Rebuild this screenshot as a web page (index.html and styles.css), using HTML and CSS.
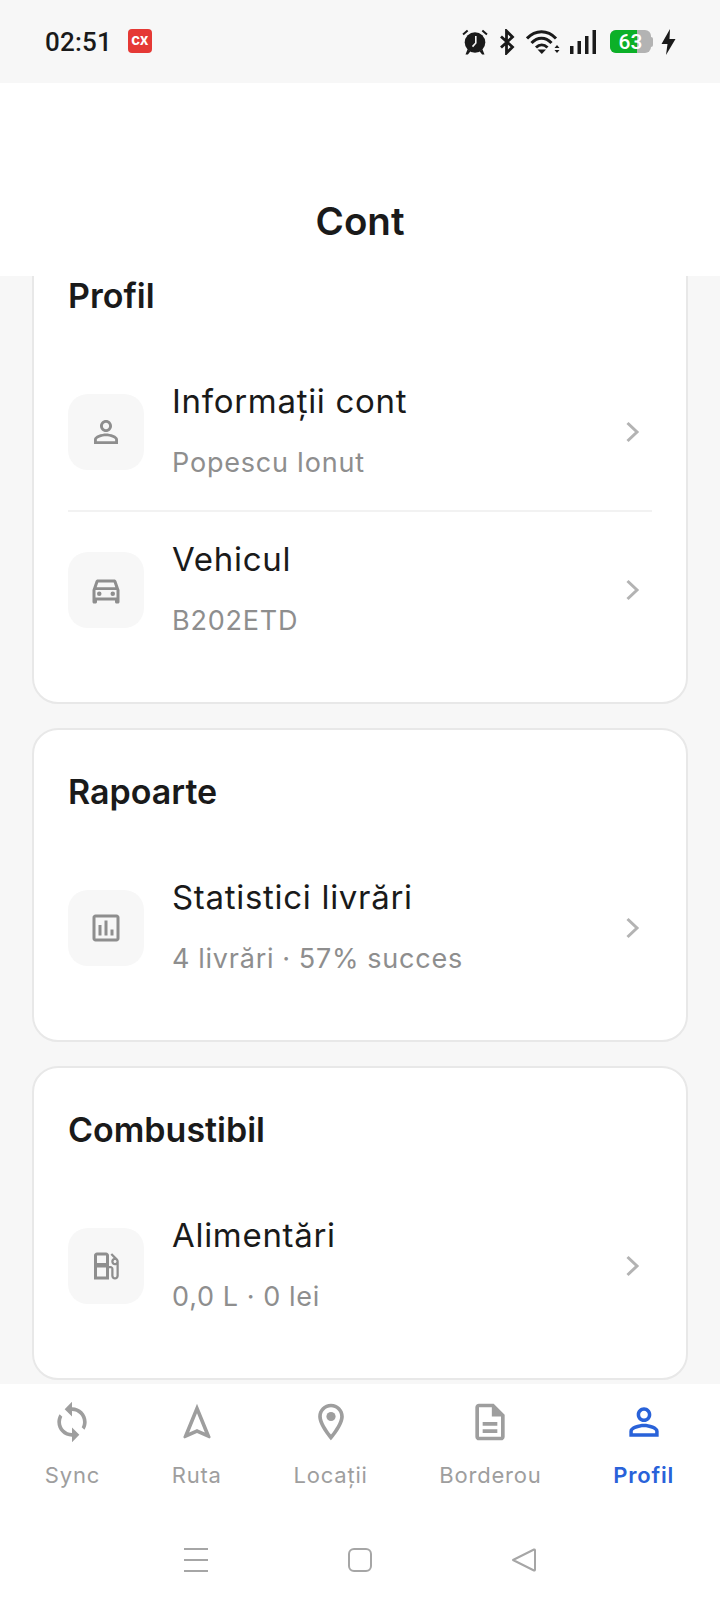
FILE: index.html
```html
<!DOCTYPE html>
<html lang="ro">
<head>
<meta charset="utf-8">
<title>Cont</title>
<link rel="stylesheet" href="styles.css">
</head>
<body>
<div class="phone">
  <div class="status">
    <div class="status-left">
      <span class="time">02:51</span>
      <span class="cx">cx</span>
    </div>
    <div class="status-right">
      <svg class="s-alarm" width="26" height="26" viewBox="0 0 26 26"><path d="M5 0.800 0.400 4.800l1.300 1.500L6.300 2.300zM21 0.800l4.600 4-1.300 1.500-4.600-4z" fill="#1a1a1a"/><circle cx="13" cy="13.500" r="10.300" fill="#1a1a1a"/><path d="M5.500 20.500 3.500 25.500h2.400l2.600-3.200zM20.500 20.500l2 5h-2.400l-2.600-3.200z" fill="#1a1a1a"/><path d="M13.800 7v7l-3.300 3.600" fill="none" stroke="#f7f7f7" stroke-width="1.600"/></svg>
      <svg class="s-bt" width="16" height="26" viewBox="0 0 16 26"><path d="M2 7.500 13.500 18 7.500 24V2l6 6L2 18.500" fill="none" stroke="#1a1a1a" stroke-width="2.800"/></svg>
      <svg class="s-wifi" width="34" height="26" viewBox="0 0 34 26"><path d="M1 9.500C9.500 0.500 21.500 0.500 30 9.500M5.500 14C11.500 7.500 19.500 7.500 25.500 14M10 18.500c3.500-3.300 8-3.300 11.500 0" fill="none" stroke="#1a1a1a" stroke-width="3"/><path d="M11.500 20.500h8.500l-4.200 4.500z" fill="#1a1a1a"/><path d="M28.500 19h5l-2.500-3zM28.500 21h5l-2.500 3z" fill="#1a1a1a"/></svg>
      <svg class="s-signal" width="26" height="24" viewBox="0 0 26 24"><path d="M0 16h3.500v8H0zM7.500 11H11v13H7.500zM15 6h3.500v18H15zM22.500 0H26v24h-3.500z" fill="#1a1a1a"/></svg>
      <div class="battery">
        <div class="battery-body"><div class="battery-fill"></div><span class="battery-num">63</span></div>
        <div class="battery-tip"></div>
      </div>
      <svg class="s-bolt" width="15" height="26" viewBox="0 0 15 26"><path d="M9 0 0.500 15H6.500L5 26 14.500 10H8.500z" fill="#1a1a1a"/></svg>
    </div>
  </div>

  <header class="header"><h1 class="page-title">Cont</h1></header>

  <main class="content">
    <section class="card card-first">
      <h2 class="card-title">Profil</h2>
      <div class="row row-divided">
        <div class="tile"><svg class="tile-icon" viewBox="0 0 24 24"><path d="M12 5.900c1.160 0 2.100.94 2.100 2.100s-.94 2.100-2.100 2.100S9.900 9.160 9.900 8s.94-2.100 2.100-2.100m0 9c2.970 0 6.100 1.460 6.100 2.100v1.100H5.900V17c0-.64 3.130-2.100 6.100-2.100M12 4C9.790 4 8 5.790 8 8s1.790 4 4 4 4-1.790 4-4-1.790-4-4-4zm0 9c-2.670 0-8 1.340-8 4v3h16v-3c0-2.660-5.330-4-8-4z"/></svg></div>
        <div class="row-text"><div class="row-title">Informații cont</div><div class="row-sub">Popescu Ionut</div></div>
        <svg class="chev" viewBox="0 0 16 22"><path d="M2.500 2 12 11 2.500 20"/></svg>
      </div>
      <div class="row">
        <div class="tile"><svg class="tile-icon" viewBox="0 0 24 24"><path d="M18.920 6.010C18.720 5.420 18.160 5 17.500 5h-11c-.66 0-1.210.42-1.420 1.010L3 12v8c0 .55.45 1 1 1h1c.55 0 1-.45 1-1v-1h12v1c0 .55.45 1 1 1h1c.55 0 1-.45 1-1v-8l-2.080-5.990zM6.850 7h10.290l1.080 3.110H5.770L6.850 7zM19 17H5v-5h14v5z"/><circle cx="7.500" cy="14.500" r="1.500"/><circle cx="16.500" cy="14.500" r="1.500"/></svg></div>
        <div class="row-text"><div class="row-title">Vehicul</div><div class="row-sub">B202ETD</div></div>
        <svg class="chev" viewBox="0 0 16 22"><path d="M2.500 2 12 11 2.500 20"/></svg>
      </div>
    </section>

    <section class="card">
      <h2 class="card-title">Rapoarte</h2>
      <div class="row">
        <div class="tile"><svg class="tile-icon" viewBox="0 0 24 24"><path d="M19 3H5c-1.100 0-2 .9-2 2v14c0 1.100.9 2 2 2h14c1.100 0 2-.9 2-2V5c0-1.100-.9-2-2-2zm0 16H5V5h14v14zM7 10h2v7H7zm4-3h2v10h-2zm4 6h2v4h-2z"/></svg></div>
        <div class="row-text"><div class="row-title">Statistici livrări</div><div class="row-sub">4 livrări · 57% succes</div></div>
        <svg class="chev" viewBox="0 0 16 22"><path d="M2.500 2 12 11 2.500 20"/></svg>
      </div>
    </section>

    <section class="card">
      <h2 class="card-title">Combustibil</h2>
      <div class="row">
        <div class="tile"><svg class="tile-icon" viewBox="0 0 24 24"><path d="M19.770 7.230l.01-.01-3.720-3.720L15 4.560l2.110 2.110c-.94.36-1.610 1.260-1.610 2.330 0 1.380 1.120 2.500 2.500 2.500.36 0 .69-.08 1-.21v7.210c0 .55-.45 1-1 1s-1-.45-1-1V14c0-1.100-.9-2-2-2h-1V5c0-1.100-.9-2-2-2H6c-1.100 0-2 .9-2 2v16h10v-7.500h1.500v5c0 1.380 1.120 2.500 2.500 2.500s2.500-1.120 2.500-2.500V9c0-.69-.28-1.320-.73-1.770zM12 13.500V19H6v-6h6v.5zm0-3.500H6V5h6v5zm6 0c-.55 0-1-.45-1-1s.45-1 1-1 1 .45 1 1-.45 1-1 1z"/></svg></div>
        <div class="row-text"><div class="row-title">Alimentări</div><div class="row-sub">0,0 L · 0 lei</div></div>
        <svg class="chev" viewBox="0 0 16 22"><path d="M2.500 2 12 11 2.500 20"/></svg>
      </div>
    </section>
  </main>

  <nav class="tabs">
    <div class="tab">
      <svg class="tab-icon" viewBox="0 0 24 24"><path d="M12 4V1L8 5l4 4V6c3.310 0 6 2.690 6 6 0 1.010-.25 1.970-.7 2.800l1.460 1.460C19.540 15.030 20 13.570 20 12c0-4.420-3.580-8-8-8zm0 14c-3.310 0-6-2.690-6-6 0-1.010.25-1.970.7-2.800L5.240 7.740C4.460 8.970 4 10.430 4 12c0 4.420 3.580 8 8 8v3l4-4-4-4v3z"/></svg>
      <span class="tab-label">Sync</span>
    </div>
    <div class="tab">
      <svg class="tab-icon" viewBox="0 0 24 24"><path d="M12 7.270l4.280 10.430-3.470-1.530-.81-.36-.81.36-3.470 1.530L12 7.270M12 2L4.500 20.290l.71.71L12 18l6.790 3 .71-.71L12 2z"/></svg>
      <span class="tab-label">Ruta</span>
    </div>
    <div class="tab">
      <svg class="tab-icon" viewBox="0 0 24 24"><path d="M12 2C8.130 2 5 5.130 5 9c0 5.250 7 13 7 13s7-7.750 7-13c0-3.870-3.130-7-7-7zM7 9c0-2.760 2.240-5 5-5s5 2.240 5 5c0 2.880-2.880 7.190-5 9.880C9.920 16.210 7 11.850 7 9z"/><circle cx="12" cy="9" r="2.500"/></svg>
      <span class="tab-label">Locații</span>
    </div>
    <div class="tab">
      <svg class="tab-icon" viewBox="0 0 24 24"><path d="M8 16h8v2H8zm0-4h8v2H8zm6-10H6c-1.100 0-2 .9-2 2v16c0 1.100.89 2 1.990 2H18c1.100 0 2-.9 2-2V8l-6-6zm4 18H6V4h7v5h5v11z"/></svg>
      <span class="tab-label">Borderou</span>
    </div>
    <div class="tab tab-active">
      <svg class="tab-icon" viewBox="0 0 24 24"><path d="M12 5.900c1.160 0 2.100.94 2.100 2.100s-.94 2.100-2.100 2.100S9.900 9.160 9.900 8s.94-2.100 2.100-2.100m0 9c2.970 0 6.100 1.460 6.100 2.100v1.100H5.900V17c0-.64 3.130-2.100 6.100-2.100M12 4C9.790 4 8 5.790 8 8s1.790 4 4 4 4-1.790 4-4-1.790-4-4-4zm0 9c-2.670 0-8 1.340-8 4v3h16v-3c0-2.660-5.330-4-8-4z"/></svg>
      <span class="tab-label">Profil</span>
    </div>
  </nav>

  <div class="sysnav">
    <svg class="sys-icon" viewBox="0 0 26 26"><path d="M1 2h24M1 13h24M1 24h24"/></svg>
    <svg class="sys-icon" viewBox="0 0 26 26"><rect x="2" y="2" width="22" height="22" rx="5"/></svg>
    <svg class="sys-icon" viewBox="0 0 26 26"><path d="M2 13 23 2.500c.6-.3 1 .1 1 .7v19.600c0 .6-.4 1-1 .7z" stroke-linejoin="round"/></svg>
  </div>
</div>
</body>
</html>
```

FILE: styles.css
```css
* { box-sizing: border-box; }

html, body { margin: 0; padding: 0; }

body {
  font-family: Inter, "Noto Sans", sans-serif;
  color: #1a1a1a;
  background: #fff;
}

.phone {
  width: 720px;
  height: 1604px;
  display: flex;
  flex-direction: column;
  overflow: hidden;
}

.status {
  height: 83px;
  flex: none;
  background: #f7f7f7;
  display: flex;
  align-items: center;
  justify-content: space-between;
  padding: 0 44px 0 45px;
}

.status-left { display: flex; align-items: center; gap: 16px; }

.time {
  font-family: Roboto, sans-serif;
  font-weight: 500;
  font-size: 26px;
  letter-spacing: 0.2px;
  line-height: 30px;
}

.cx {
  width: 24px;
  height: 24px;
  margin-bottom: 2px;
  border-radius: 4px;
  background: #e53935;
  color: #fff;
  font-family: Inter, sans-serif;
  font-weight: 700;
  font-size: 15px;
  line-height: 22px;
  text-align: center;
}

.status-right { display: flex; align-items: center; }

.s-bt { margin-left: 11px; }
.s-wifi { margin-left: 11px; }
.s-signal { margin-left: 10px; }

.battery { display: flex; align-items: center; margin-left: 14px; }

.battery-body {
  position: relative;
  width: 41px;
  height: 23px;
  border-radius: 6px;
  background: #b3b3b3;
  overflow: hidden;
}

.battery-fill { width: 65%; height: 100%; background: #0cb028; }

.battery-num {
  position: absolute;
  inset: 0;
  text-align: center;
  color: #fff;
  font-family: Roboto, sans-serif;
  font-weight: 500;
  font-size: 21px;
  line-height: 24px;
}

.battery-tip {
  width: 2px;
  height: 10px;
  background: #b3b3b3;
  border-radius: 0 2px 2px 0;
}

.s-bolt { margin-left: 8px; }

.header {
  height: 193px;
  flex: none;
  background: #fff;
  text-align: center;
  padding-top: 116px;
}

.page-title {
  margin: 0;
  font-size: 38.5px;
  font-weight: 600;
  line-height: 44px;
}

.content {
  flex: 1;
  min-height: 0;
  overflow: hidden;
  background: #f7f7f7;
  padding: 0 32px;
  display: flex;
  flex-direction: column;
  gap: 24px;
}

.card {
  flex: none;
  background: #fff;
  border: 2px solid #e8e8e8;
  border-radius: 26px;
  padding: 33px 34px 34px;
}

.card-first { margin-top: -44px; }

.card-title {
  margin: 0 0 29px;
  font-size: 34px;
  font-weight: 600;
  letter-spacing: 0;
  line-height: 58px;
}

.row {
  display: flex;
  align-items: center;
  gap: 28px;
  height: 156px;
}

.row-divided { border-bottom: 2px solid #f2f2f2; height: 158px; padding-bottom: 0; }

.tile {
  width: 76px;
  height: 76px;
  flex: none;
  border-radius: 20px;
  background: #f7f7f7;
  display: flex;
  align-items: center;
  justify-content: center;
}

.tile-icon { width: 36px; height: 36px; fill: #8e8e8e; }

.row-text { flex: 1; min-width: 0; }

.row-title {
  font-size: 33px;
  line-height: 34px;
  letter-spacing: 0.7px;
  margin-bottom: 27px;
}

.row-sub {
  font-size: 27px;
  line-height: 36px;
  letter-spacing: 0.8px;
  word-spacing: -0.5px;
  color: #8e8e8e;
}

.chev {
  width: 16px;
  height: 22px;
  flex: none;
  margin-right: 11px;
  fill: none;
  stroke: #b3b3b3;
  stroke-width: 3;
}

.tabs {
  flex: none;
  height: 148px;
  background: #fff;
  padding: 16px 10px 0 9px;
  display: flex;
  align-items: flex-start;
  justify-content: space-around;
}

.tab { display: flex; flex-direction: column; align-items: center; }

.tab-icon { width: 44px; height: 44px; fill: #9e9e9e; }

.tab-label {
  margin-top: 16px;
  font-size: 22px;
  line-height: 30px;
  letter-spacing: 0.8px;
  color: #9e9e9e;
}

.tab-active .tab-icon { fill: #2962d9; }
.tab-active .tab-label { color: #2962d9; font-weight: 600; }

.sysnav {
  flex: none;
  height: 72px;
  background: #fff;
  display: flex;
  justify-content: center;
  gap: 138px;
  padding-top: 15px;
}

.sys-icon {
  width: 26px;
  height: 26px;
  fill: none;
  stroke: #a6a6a6;
  stroke-width: 2;
}
```
